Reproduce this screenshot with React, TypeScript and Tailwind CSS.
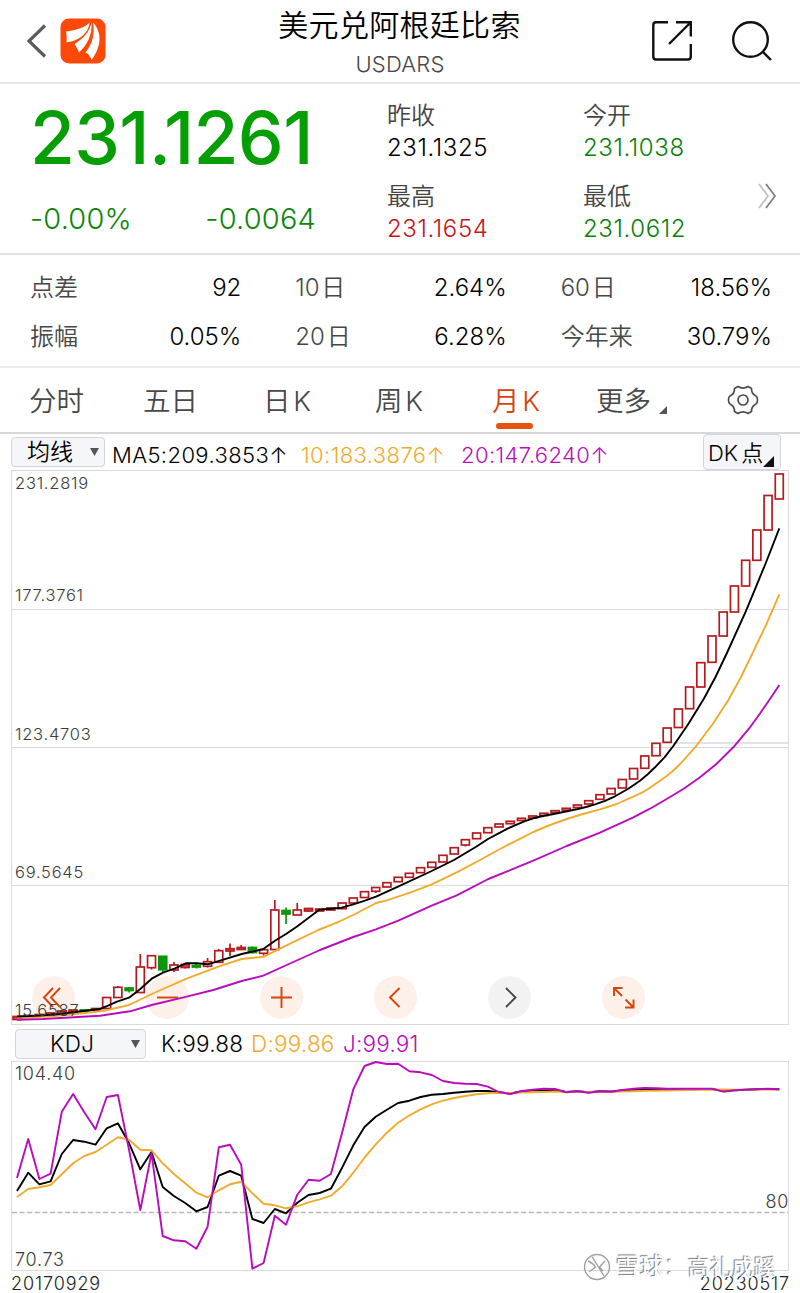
import type { ReactNode } from 'react';

const UP = '#b51a1e';
const DOWN = '#0a960a';
const BLACK = '#000000';
const ORANGE = '#f0ab2e';
const PURPLE = '#b80dbd';

const STEP = 11.21;
const FIRST_X = 17;

// [open/close top, open/close bottom, wick top, wick bottom, kind]
type Kind = 'up' | 'flat' | 'down';
type Candle = [number, number, number, number, Kind];

const candles: Candle[] = [
  [1016.5, 1019.5, 1016.5, 1019.5, 'flat'],
  [1015.5, 1017, 1015.5, 1017, 'flat'],
  [1014.5, 1016, 1014.5, 1016, 'flat'],
  [1013, 1015, 1013, 1015, 'flat'],
  [1011, 1014, 1011, 1014, 'flat'],
  [1010, 1012, 1010, 1012, 'flat'],
  [1010, 1011.5, 1009, 1012, 'down'],
  [1008.5, 1010, 1008.5, 1010, 'flat'],
  [997.5, 1008.5, 997, 1009, 'up'],
  [987.3, 997.5, 986, 997.5, 'up'],
  [988, 990.5, 987, 992.5, 'down'],
  [967, 992.5, 954, 992.5, 'up'],
  [955.7, 967.7, 955.7, 969.5, 'up'],
  [956.3, 969.7, 956.3, 972, 'down'],
  [965, 970, 962, 972, 'up'],
  [964.5, 967.5, 963, 968.5, 'flat'],
  [965.5, 967, 963.5, 968.5, 'down'],
  [961.7, 966.3, 958, 967.5, 'up'],
  [950.7, 962.3, 949, 962.3, 'up'],
  [948.7, 951, 943.5, 956, 'flat'],
  [947.5, 949.5, 945, 950, 'flat'],
  [947.5, 952.5, 946.5, 953.5, 'down'],
  [949.7, 953.3, 949, 955.5, 'up'],
  [910, 949.5, 900, 949.5, 'up'],
  [910.5, 914, 907.5, 924, 'down'],
  [910, 915, 903, 915, 'up'],
  [908.5, 911, 908, 911.5, 'flat'],
  [909, 911, 909, 911, 'flat'],
  [908, 910, 908, 910, 'flat'],
  [903, 908.7, 903, 908.7, 'up'],
  [898, 903, 898, 903, 'up'],
  [891.7, 897.5, 891.7, 897.5, 'up'],
  [887.5, 891.3, 887.5, 893, 'up'],
  [882.7, 887, 882.7, 887, 'up'],
  [877.3, 881.7, 877.3, 881.7, 'up'],
  [873.3, 877.3, 873.3, 877.3, 'up'],
  [867.7, 872.7, 867.7, 872.7, 'up'],
  [862.3, 867.3, 862.3, 867.3, 'up'],
  [855.3, 862, 855.3, 862, 'up'],
  [847.7, 854, 847.7, 854, 'up'],
  [839.7, 845, 839.7, 846.5, 'up'],
  [833, 838.7, 833, 838.7, 'up'],
  [827.7, 832.7, 827.7, 832.7, 'up'],
  [824, 827, 824, 827, 'up'],
  [821.3, 823.7, 821.3, 823.7, 'up'],
  [818.3, 820.5, 818.3, 820.5, 'up'],
  [816, 818, 816, 818, 'up'],
  [813.3, 815.5, 813.3, 815.5, 'up'],
  [810.7, 812.7, 810.7, 812.7, 'up'],
  [808.3, 810.3, 808.3, 810.3, 'up'],
  [805, 807.5, 805, 807.5, 'up'],
  [800.7, 804, 800.7, 804, 'up'],
  [794.7, 799.3, 794.7, 799.3, 'up'],
  [788.5, 794, 788.5, 794, 'up'],
  [779.5, 788, 779.5, 788, 'up'],
  [768.5, 779, 768.5, 779, 'up'],
  [756, 768.3, 756, 768.3, 'up'],
  [743.3, 755.7, 743.3, 755.7, 'up'],
  [728, 742.3, 728, 742.3, 'up'],
  [709, 727.5, 709, 727.5, 'up'],
  [687, 708.7, 687, 708.7, 'up'],
  [662.7, 687, 662.7, 687, 'up'],
  [636, 662.3, 636, 662.3, 'up'],
  [612, 636, 612, 636, 'up'],
  [586, 612, 586, 612, 'up'],
  [560.3, 586, 560.3, 586, 'up'],
  [530, 560.3, 530, 560.3, 'up'],
  [495.5, 530, 495.5, 530, 'up'],
  [474, 499, 474, 499, 'up'],
];

const ma5 =
  '17,1016.5 40,1015.6 60,1014 83,1011 100,1009 108,1005.7 117,1001.7 129,997.7 140,989.3 151.7,978.7 163,972.7 175,968.3 185.7,963.3 196.7,963.3 207.7,964.3 220,960.7 241.7,954 263.3,949 275,940.7 286,934 296.7,926.7 319.3,909.7 341.7,907.7 353.3,904.3 365,900.7 376,896.7 398,886.7 431.7,871 454,860 476.5,846.5 488,839 500,832.7 508,828.3 516.7,824.7 525,821.2 533.3,818.3 544,815.8 555,813.7 576.7,809.3 586,807 595,804.3 605,800.8 615,796.3 628.3,788.7 640,780.7 648,774 655,767.3 664.5,757.3 673.3,746 688.3,724 704,698.5 715.5,677 726.7,653.5 745.7,611.7 753.3,593.3 766,562.5 779.3,528.3';
const ma10 =
  '17,1018 42,1016.7 66.7,1015 105,1010.7 129,1005 151.7,994 186.7,978.7 218.3,966.7 241.7,959 264,956.7 286,945.7 318.3,930 336.7,922.7 353.3,915 376,903 386.7,900.3 410,892.7 431.7,884.3 456.7,872.3 480,860 500,849 533.3,832 550,825 566.7,819 583,814 600,809.3 616.7,804 633.3,796.7 642,792.6 650,787.7 666.7,776 674.5,769.5 681.7,762.3 696.7,745.3 713.3,723.3 728.3,700 741,677 753.3,651.7 766.7,623.5 779.3,594.3';
const ma20 =
  '17,1019.7 43,1019 100,1015.7 130,1011.3 151.7,1005 186.7,996.7 213.3,990 241.7,981 263.3,975.7 286.7,965 320,950 353.3,937 376,929.3 398.3,920.7 431.7,905.7 456.7,895.3 488.3,879 533.3,860.7 566.7,846 600,832.7 633.3,817.3 650,808.7 666.7,799 683.3,789 700,777.3 716.7,763.7 733.3,747.3 750,727.3 760,713.5 769.3,700 779.3,685';

const kValues = [
  1191, 1172.7, 1184.3, 1181.3, 1154, 1140, 1141.7, 1144.7, 1128.3, 1123.3, 1143.3, 1169.3, 1152, 1187, 1196, 1203,
  1211.3, 1207, 1175.7, 1171, 1175.7, 1219, 1223, 1209, 1213.3, 1202.7, 1195, 1193, 1188.7, 1167.7, 1145.3, 1127,
  1116.7, 1109.7, 1103, 1100.7, 1097, 1094.7, 1094, 1092.7, 1091.7, 1091, 1091, 1092.2, 1093.5, 1091.5, 1090.5, 1090,
  1090, 1092, 1091.3, 1092.3, 1091.3, 1091.5, 1090.5, 1089.7, 1089.3, 1089.3, 1089.3, 1089.3, 1089.2, 1089, 1089, 1091,
  1090.3, 1089.7, 1089.3, 1089, 1089.3,
];
const dValues = [
  1197, 1189, 1187.3, 1185, 1174.3, 1163.3, 1156, 1152, 1144.7, 1137.3, 1139.7, 1149.7, 1150.3, 1163.3, 1174, 1183.3,
  1192.7, 1197.3, 1190.3, 1184.3, 1181.7, 1193.3, 1203.7, 1205.3, 1208.3, 1206.3, 1202.3, 1199.3, 1195.7, 1186.3,
  1172.7, 1157.7, 1144.3, 1132.7, 1122.7, 1115.3, 1109.3, 1104.3, 1100.7, 1098, 1096, 1094.3, 1093.3, 1092.7, 1093,
  1092.5, 1092.3, 1092, 1091.5, 1092, 1091.7, 1092, 1091.7, 1091.7, 1091.5, 1091.2, 1090.9, 1090.7, 1090.5, 1090.2,
  1090, 1089.9, 1089.7, 1089.5, 1089.8, 1089.8, 1089.6, 1089.6, 1089.6,
];
const jValues = [
  1178, 1139, 1179, 1173.7, 1111.7, 1094, 1112.3, 1129.3, 1097, 1095, 1150, 1210, 1153.3, 1236, 1240.3, 1241.3, 1248.7,
  1226.7, 1147.3, 1144.7, 1164.7, 1268.7, 1263, 1215.7, 1224.7, 1194.7, 1179.7, 1180.7, 1174, 1132.7, 1089.3, 1066,
  1062, 1064, 1063.7, 1071.3, 1072.3, 1075, 1081, 1083, 1083.7, 1084, 1086.7, 1092, 1094, 1091, 1089.7, 1088.7, 1089,
  1092.3, 1091.3, 1092.7, 1091.3, 1091.7, 1090, 1088.7, 1088, 1088.3, 1088.7, 1088.7, 1088.7, 1088.7, 1088.7, 1091.7,
  1090.3, 1089.7, 1089.3, 1088.7, 1089.3,
];

const toPoints = (values: number[]) => values.map((y, i) => `${(FIRST_X + i * STEP).toFixed(1)},${y}`).join(' ');

function Header() {
  return (
    <header className="flex h-[84px] items-center border-b-2 border-[#e6e6e6] pr-[27px] pl-[26px]">
      <svg width="22" height="36" viewBox="0 0 22 36" fill="none" stroke="#5c5c5c" strokeWidth="3.200" className="-mt-px">
        <path d="M19 2.500 3 18l16 15.500" />
      </svg>
      <svg width="46" height="46" viewBox="0 0 46 46" className="-mt-px ml-3">
        <rect x="0.500" y="0.500" width="45" height="45" rx="8.500" fill="#fb4a08" />
        <g fill="#fff">
          <path d="M6 13.500C17 12 25 9.500 29.500 4.500C29 14 20 23 6.500 24.500C6.800 20.500 6.800 17 6 13.500Z" />
          <path d="M31.500 4.500C32.500 17 27 27 19 34.500C17.500 31 16 28 14.500 26C23 21 29.500 14 31.500 4.500Z" />
          <path d="M33 4.500C42 14 42 28 31.500 42C30.500 38.500 28.500 36 25.500 34.500C32.500 26 35 16 33 4.500Z" />
        </g>
      </svg>
      <div className="flex flex-1 flex-col items-center">
        <h1 className="mt-px pl-[42px] text-[30px] leading-[36px] font-[350] tracking-[0.3px] text-black">美元兑阿根廷比索</h1>
        <div className="mt-[8px] pl-[43px] text-[22px] leading-[26px] tracking-[0.2px] text-[#484848]">USDARS</div>
      </div>
      <svg width="42" height="42" viewBox="0 0 42 42" fill="none" stroke="#111" strokeWidth="2.400">
        <path d="M17 2.300H5Q2.300 2.300 2.300 5V36.500Q2.300 39.500 5 39.500H37Q39.800 39.500 39.800 36.500V24M25 2.300H39.800V16.500M39.500 2.500 18 24" />
      </svg>
      <svg width="42" height="42" viewBox="0 0 42 42" fill="none" stroke="#111" strokeWidth="2.400" className="ml-[38px]">
        <circle cx="19.500" cy="19.500" r="17.300" />
        <path d="m31.500 31.500 8.500 8.500" />
      </svg>
    </header>
  );
}

function Quote({ label, value, color }: { label: string; value: string; color: string }) {
  return (
    <div className="h-[80.500px]">
      <div className="text-2xl leading-[30px] text-[#444]">{label}</div>
      <div className={`mt-[3px] text-2xl leading-7 tracking-[0.600px] ${color}`}>{value}</div>
    </div>
  );
}

function PricePanel() {
  return (
    <section className="flex h-[171px] border-b-2 border-[#e3e3e3] pt-[17px] pl-[30px]">
      <div className="w-[357px]">
        <div className="-mt-px text-[73px] leading-[76px] font-medium tracking-[-0.700px] text-[#059e05]">231.1261</div>
        <div className="mt-[25px] flex w-[286px] justify-between text-[29px] leading-9 tracking-[0.2px] text-[#0d850d]">
          <span>-0.00%</span>
          <span>-0.0064</span>
        </div>
      </div>
      <div className="w-[196px]">
        <Quote label="昨收" value="231.1325" color="text-black" />
        <Quote label="最高" value="231.1654" color="text-[#c4151a]" />
      </div>
      <div className="w-[173px]">
        <Quote label="今开" value="231.1038" color="text-[#0a800a]" />
        <Quote label="最低" value="231.0612" color="text-[#0a800a]" />
      </div>
      <svg width="22" height="26" viewBox="0 0 22 26" fill="none" strokeWidth="1.800" className="mt-[82px]">
        <path d="m3 1 9 12-9 12" stroke="#c2c2c2" />
        <path d="m10 1 9 12-9 12" stroke="#808080" />
      </svg>
    </section>
  );
}

function Stat({ label, value }: { label: string; value: string }) {
  return (
    <div className="flex h-[49px] justify-between text-2xl leading-[30px]">
      <span className="text-[#484848] [word-spacing:-5px]">{label}</span>
      <span className="text-black">{value}</span>
    </div>
  );
}

function Stats() {
  return (
    <section className="flex h-[113px] gap-[54px] border-b-2 border-[#ececec] pt-[18px] pr-[28px] pl-[30px]">
      <div className="w-[212px]">
        <Stat label="点差" value="92" />
        <Stat label="振幅" value="0.05%" />
      </div>
      <div className="w-[212px]">
        <Stat label="10 日" value="2.64%" />
        <Stat label="20 日" value="6.28%" />
      </div>
      <div className="w-[212px]">
        <Stat label="60 日" value="18.56%" />
        <Stat label="今年来" value="30.79%" />
      </div>
    </section>
  );
}

function Tabs() {
  return (
    <nav className="flex h-[66px] border-b-2 border-[#d8d8da] pt-[15px] pl-[29px] text-[27.500px] leading-9 text-[#484848] [word-spacing:-5px]">
      <span className="w-[114px]">分时</span>
      <span className="w-[120px]">五日</span>
      <span className="w-[112px]">日 K</span>
      <span className="w-[117px]">周 K</span>
      <span className="flex w-[104px] flex-col text-[#d8420a]">
        月 K
        <i className="mt-[4px] ml-[4px] h-[6px] w-[37px] rounded-full bg-[#e5530e]" />
      </span>
      <span className="flex w-[131px]">
        更多
        <svg width="8" height="8" viewBox="0 0 8 8" className="mt-[23px] ml-[8px]">
          <path d="M8 0V8H0Z" fill="#555" />
        </svg>
      </span>
      <svg width="32" height="32" viewBox="0 0 32 32" fill="none" stroke="#4c4c4c" strokeWidth="1.700" className="mt-px">
        <path d="M11 2.500Q16 5.800 21 2.500L24.500 4.500Q24.300 9.800 29 12Q30.500 12.800 30.500 16T29 20Q24.300 22.200 24.500 27.500L21 29.500Q16 26.200 11 29.500L7.500 27.500Q7.700 22.200 3 20Q1.500 19.200 1.500 16T3 12Q7.700 9.800 7.500 4.500Z" strokeLinejoin="round" />
        <circle cx="16" cy="16" r="5" />
      </svg>
    </nav>
  );
}

function Caret() {
  return (
    <svg width="9" height="8" viewBox="0 0 9 8">
      <path d="M0 0H9L4.500 8Z" fill="#555" />
    </svg>
  );
}

function RoundButton({ children, muted }: { children: ReactNode; muted?: boolean }) {
  return (
    <button className={`flex size-[43px] items-center justify-center rounded-full ${muted ? 'bg-[#f2f2f2]' : 'bg-[#fcf0e8]'}`}>
      <svg width="43" height="43" viewBox="0 0 43 43" fill="none" stroke={muted ? '#444' : '#d8450c'} strokeWidth="1.900">
        {children}
      </svg>
    </button>
  );
}

function Controls() {
  return (
    <div className="absolute top-[505.500px] left-[20.500px] flex gap-[71px]">
      <RoundButton>
        <path d="m21 12-9 9.500 9 9.500M28 12l-9 9.500 9 9.500" />
      </RoundButton>
      <RoundButton>
        <path d="M11 21.500H32" />
      </RoundButton>
      <RoundButton>
        <path d="M11 21.500H32M21.500 11V32" />
      </RoundButton>
      <RoundButton>
        <path d="m25.500 12-9.500 9.500 9.500 9.500" />
      </RoundButton>
      <RoundButton muted>
        <path d="m18 12 9.500 9.500-9.500 9.500" />
      </RoundButton>
      <RoundButton>
        <path d="M12 20V12H20.500M12.500 12.500 20 20M31.500 23.500V31.500H23M31 31 23.500 23.500" />
      </RoundButton>
    </div>
  );
}

function CandleShape({ candle, index }: { candle: Candle; index: number }) {
  const [top, bottom, high, low, kind] = candle;
  const x = FIRST_X + index * STEP;
  const color = kind === 'down' ? DOWN : UP;
  const fill = kind === 'down' ? DOWN : kind === 'flat' ? '#d8494c' : 'none';
  return (
    <g stroke={color} fill={fill} strokeWidth="1.700">
      {high < top && <path d={`M${x} ${high}V${top}`} />}
      {low > bottom && <path d={`M${x} ${bottom}V${low}`} />}
      <rect x={x - 4} y={top} width="8" height={bottom - top} />
    </g>
  );
}

function MainChart() {
  return (
    <section className="relative mx-[11px] h-[555px]">
      <Controls />
      <svg width="778" height="555" viewBox="11 470 778 555" fill="none" className="relative">
        <g stroke="#d9dadc">
          <path d="M12 609.500H788M12 747.500H788M12 885.500H788" />
          <path d="M662 743H788" stroke="#e4e4e6" strokeWidth="2" />
          <rect x="11.500" y="470.500" width="777" height="554" />
        </g>
        {candles.map((candle, i) => (
          <CandleShape key={i} candle={candle} index={i} />
        ))}
        <g strokeWidth="1.900" strokeLinejoin="round">
          <polyline points={ma10} stroke={ORANGE} />
          <polyline points={ma20} stroke={PURPLE} />
          <polyline points={ma5} stroke={BLACK} />
        </g>
      </svg>
      <div className="pointer-events-none absolute inset-0 text-[16.500px] leading-5 tracking-[0.750px] text-[#3c3c3c]">
        <span className="absolute top-[3px] left-[4px]">231.2819</span>
        <span className="absolute top-[115px] left-[4px]">177.3761</span>
        <span className="absolute top-[254px] left-[4px]">123.4703</span>
        <span className="absolute top-[392px] left-[4px]">69.5645</span>
        <span className="absolute top-[530px] left-[4px]">15.6587</span>
      </div>
    </section>
  );
}

function Watermark() {
  return (
    <div className="absolute top-[192px] left-[572px] flex items-center text-[24px] leading-[28px] font-normal text-white [text-shadow:-1px_-1px_1px_#777]">
      <svg width="28" height="28" viewBox="0 0 28 28" fill="none" stroke="#a0a0a0" strokeWidth="1.400">
        <circle cx="14" cy="14" r="12.500" />
        <path d="M5 8Q11 11 12.500 14L6 19M9 3.500 21 23M22 8 16.500 14 20 18" />
      </svg>
      <span className="ml-[5px]">雪球：</span>
      <span className="text-[22px]">高礼成蹊</span>
    </div>
  );
}

function KdjChart() {
  return (
    <section className="relative mx-[11px] h-[210px]">
      <svg width="778" height="210" viewBox="11 1061 778 210" fill="none">
        <rect x="11.500" y="1061.500" width="777" height="209" stroke="#d9dadc" />
        <path d="M12 1212.500H788" stroke="#b8b8b8" strokeWidth="1.300" strokeDasharray="5 2.600" />
        <g strokeWidth="1.900" strokeLinejoin="round">
          <polyline points={toPoints(kValues)} stroke={BLACK} />
          <polyline points={toPoints(dValues)} stroke={ORANGE} />
          <polyline points={toPoints(jValues)} stroke={PURPLE} />
        </g>
      </svg>
      <div className="absolute inset-0 text-lg leading-5 tracking-[0.750px] text-[#3c3c3c]">
        <span className="absolute top-[3px] left-[4px]">104.40</span>
        <span className="absolute top-[189px] left-[4px]">70.73</span>
        <span className="absolute top-[131px] right-0">80</span>
      </div>
      <Watermark />
    </section>
  );
}

export default function App() {
  return (
    <main className="h-[1293px] w-[800px] overflow-hidden bg-white font-['Inter','Noto_Sans_CJK_SC',sans-serif] font-[350] whitespace-nowrap">
      <Header />
      <PricePanel />
      <Stats />
      <Tabs />
      <div className="flex h-[36px] items-start text-[22px] leading-[26px] tracking-[0.400px]">
        <button className="mt-[3px] ml-[11px] flex h-[30px] w-[94px] items-center justify-between rounded border border-[#d3d5da] bg-[#f5f6f9] pr-[5px] pl-[15px] text-[23px] tracking-normal">
          均线
          <Caret />
        </button>
        <span className="mt-[8px] ml-[7px] w-[189px] text-black">MA5:209.3853↑</span>
        <span className="mt-[8px] w-[160px] text-[#f0ab2e]">10:183.3876↑</span>
        <span className="mt-[8px] w-[242px] text-[#b80dbd]">20:147.6240↑</span>
        <button className="flex h-[36px] w-[78px] items-start rounded border border-[#d3d5da] bg-[#f5f6f9] pt-[5px] pl-[4px] tracking-normal text-black [word-spacing:-3px]">
          DK 点
          <svg width="11" height="11" viewBox="0 0 11 11" className="mt-[16px]">
            <path d="M11 0V11H0Z" fill="#111" />
          </svg>
        </button>
      </div>
      <MainChart />
      <div className="flex h-[36px] items-start text-[22.500px] leading-[28px] tracking-[0.2px]">
        <button className="mt-[4px] ml-[15px] flex h-[30px] w-[131px] items-center justify-between rounded border border-[#d3d5da] bg-[#f5f6f9] pr-[5px] pl-[34px]">
          KDJ
          <Caret />
        </button>
        <span className="mt-[5px] ml-[15px] w-[90px]">K:99.88</span>
        <span className="mt-[5px] w-[92px] text-[#f0ab2e]">D:99.86</span>
        <span className="mt-[5px] text-[#b80dbd]">J:99.91</span>
      </div>
      <KdjChart />
      <footer className="flex justify-between pr-[10px] pl-[11px] text-lg leading-[25px] tracking-[0.900px] text-[#222]">
        <span>20170929</span>
        <span>20230517</span>
      </footer>
    </main>
  );
}
